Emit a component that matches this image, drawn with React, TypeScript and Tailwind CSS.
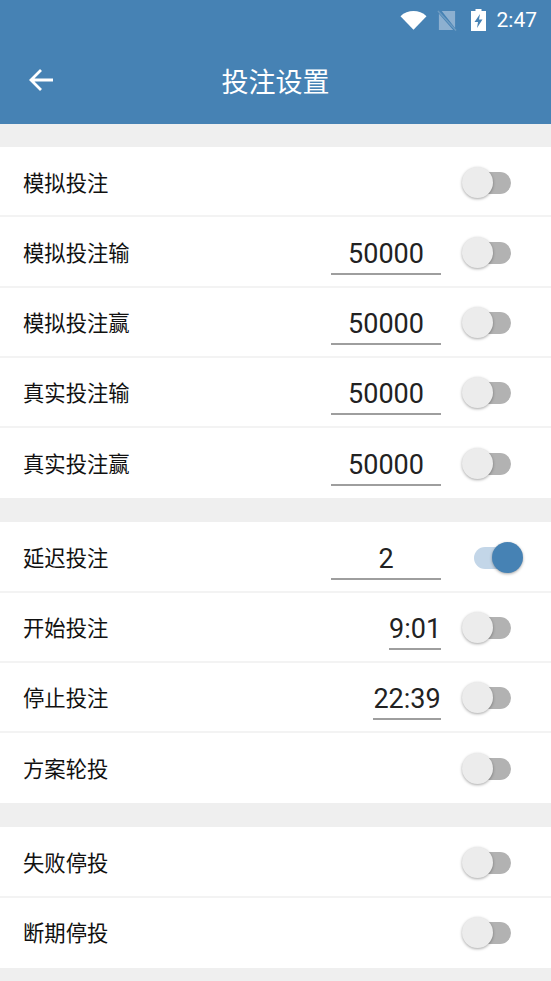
const font = "[font-family:Roboto,'Noto_Sans_CJK_SC',sans-serif]";

type RowProps = {
  label: string;
  value?: string;
  inputWidth?: string;
  on?: boolean;
};

function Toggle({ on }: { on?: boolean }) {
  if (on) {
    return (
      <div className="relative w-[60px] h-[31px] shrink-0">
        <div className="absolute left-[12px] top-[5px] w-[36px] h-[22px] rounded-full bg-[#c3d6e8]" />
        <div className="absolute right-[-1px] top-0 w-[31px] h-[31px] rounded-full bg-[#4682b4] shadow-[0_1px_3px_rgba(0,0,0,0.35)]" />
      </div>
    );
  }
  return (
    <div className="relative w-[60px] h-[31px] shrink-0">
      <div className="absolute left-[12px] top-[5px] w-[37px] h-[22px] rounded-full bg-[#b2b2b2]" />
      <div className="absolute left-0 top-0 w-[31px] h-[31px] rounded-full bg-[#ececec] shadow-[0_1px_3px_rgba(0,0,0,0.35)]" />
    </div>
  );
}

function Row({ label, value, inputWidth, on }: RowProps) {
  return (
    <div className="flex items-center h-[70.25px] pt-[5px] pl-[23px] pr-[29px] border-b-2 border-[#f3f3f3] last:border-white">
      <span className="flex-1 text-[21.33px] text-[#111]">{label}</span>
      {value && (
        <div className={`${inputWidth} h-[40px] mt-[2px] text-center text-[27px] leading-[38px] text-[#222] border-b-2 border-[#9e9e9e]`}>
          {value}
        </div>
      )}
      <div className="ml-[21px] mb-[3px]">
        <Toggle on={on} />
      </div>
    </div>
  );
}

function StatusBar() {
  return (
    <div className="flex items-center justify-end h-[40px] pr-[14px]">
      <svg width="27" height="20" viewBox="0 0 28 20">
        <path d="M0.5 6 C8 -1 20 -1 27.5 6 L14 20 Z" fill="#fff" />
      </svg>
      <svg className="ml-[10px]" width="20" height="21" viewBox="0 0 21 22">
        <path d="M5 1 H19 V19 Z M2 4 L17 21 H2 Z" fill="#8db0d0" />
        <path d="M1 1 L20 21.5" stroke="#6d9bc2" strokeWidth="1.5" />
      </svg>
      <svg className="ml-[14px]" width="15" height="22" viewBox="0 0 15 22">
        <path d="M4.5 0 H10.5 V2 H15 V22 H0 V2 H4.5 Z" fill="#fff" />
        <path d="M9 5 L3.5 13 H7 L6 19 L11.5 10.5 H8 Z" fill="#4682b4" />
      </svg>
      <span className="ml-[11px] text-[21px] text-white leading-none">2:47</span>
    </div>
  );
}

export default function App() {
  return (
    <div className={`w-[551px] h-[981px] overflow-hidden bg-[#efefef] ${font}`}>
      <div className="h-[124px] bg-[#4682b4]">
        <StatusBar />
        <div className="relative flex items-center justify-center h-[84px] pt-[2px]">
          <svg className="absolute left-[28px] top-[27px]" width="27" height="26" viewBox="0 0 27 26" fill="none">
            <path d="M25 13 H3 M13 3 L3 13 L13 23" stroke="#fff" strokeWidth="2.8" />
          </svg>
          <span className="text-[27px] text-white">投注设置</span>
        </div>
      </div>

      <div className="mt-[23px] bg-white">
        <Row label="模拟投注" />
        <Row label="模拟投注输" value="50000" inputWidth="w-[110px]" />
        <Row label="模拟投注赢" value="50000" inputWidth="w-[110px]" />
        <Row label="真实投注输" value="50000" inputWidth="w-[110px]" />
        <Row label="真实投注赢" value="50000" inputWidth="w-[110px]" />
      </div>

      <div className="mt-[24px] bg-white">
        <Row label="延迟投注" value="2" inputWidth="w-[110px]" on />
        <Row label="开始投注" value="9:01" inputWidth="w-[52px]" />
        <Row label="停止投注" value="22:39" inputWidth="w-[68px]" />
        <Row label="方案轮投" />
      </div>

      <div className="mt-[24px] bg-white">
        <Row label="失败停投" />
        <Row label="断期停投" />
      </div>
    </div>
  );
}
